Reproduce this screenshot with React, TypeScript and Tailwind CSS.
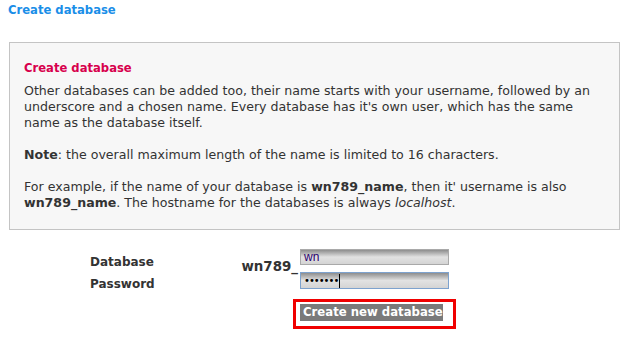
import React from 'react'

const font = { fontFamily: '"DejaVu Sans", Verdana, sans-serif' }

const App = () => {
  return (
    <div className="h-[342px] w-[629px] bg-white text-[12.6px] text-[#333]" style={font}>
      <div className="px-[8px] pt-[1px] text-[11.6px] font-bold leading-[18px] text-[#1a8ee8]">
        Create database
      </div>

      <div className="mx-[9px] mt-[23px] border border-[#c4c4c4] bg-[#f7f7f7] px-[14px] pb-[18px] pt-[17px] leading-[16px]">
        <div className="mb-[7px] text-[11.6px] font-bold text-[#d7004d]">Create database</div>
        <p>
          Other databases can be added too, their name starts with your username, followed by an
          underscore and a chosen name. Every database has it's own user, which has the same name
          as the database itself.
        </p>
        <p className="mt-[16px]">
          <b>Note</b>: the overall maximum length of the name is limited to 16 characters.
        </p>
        <p className="mt-[16px]">
          For example, if the name of your database is <b>wn789_name</b>, then it' username is also{' '}
          <b>wn789_name</b>. The hostname for the databases is always <i>localhost</i>.
        </p>
      </div>

      <div className="mt-[19px] flex">
        <div className="ml-[90px] flex w-[146px] flex-col gap-[6px] pt-[5px] text-[12px] font-bold leading-[16px]">
          <span>Database</span>
          <span>Password</span>
        </div>
        <div className="flex flex-col">
          <div className="flex items-start">
            <span className="mt-[10px] w-[64px] whitespace-nowrap pr-[2px] text-right text-[13.4px] font-bold leading-[16px]">
              wn789_
            </span>
            <div className="flex flex-col gap-[7px]">
              <div
                className="flex h-[16px] w-[149px] items-center border border-[#a9a9a9] bg-gradient-to-b from-[#8e8e8e] via-[#e2e2e2] to-[#d4d4d4] px-[3px] text-[12px] leading-none text-[#2a006e]"
                style={{ fontFamily: '"Liberation Sans", Arial, sans-serif' }}
              >
                wn
              </div>
              <div className="flex h-[17px] w-[149px] items-center border border-[#7da2ce] bg-gradient-to-b from-[#8e8e8e] via-[#e2e2e2] to-[#d4d4d4] px-[3px] text-[10px] leading-none text-black">
                <span className="tracking-[-1px]">•••••••</span>
                <span className="ml-[1px] h-[14px] w-px bg-black" />
              </div>
            </div>
          </div>
          <div className="ml-[57px] mt-[10px] w-[163px] border-[3px] border-[#f00000] pb-[5px] pl-[4px] pt-[2px]">
            <span className="block w-[143px] whitespace-nowrap bg-[#7a7a7a] px-[3px] text-[11.7px] font-bold leading-[17px] text-white">
              Create new database
            </span>
          </div>
        </div>
      </div>
    </div>
  )
}

export default App
